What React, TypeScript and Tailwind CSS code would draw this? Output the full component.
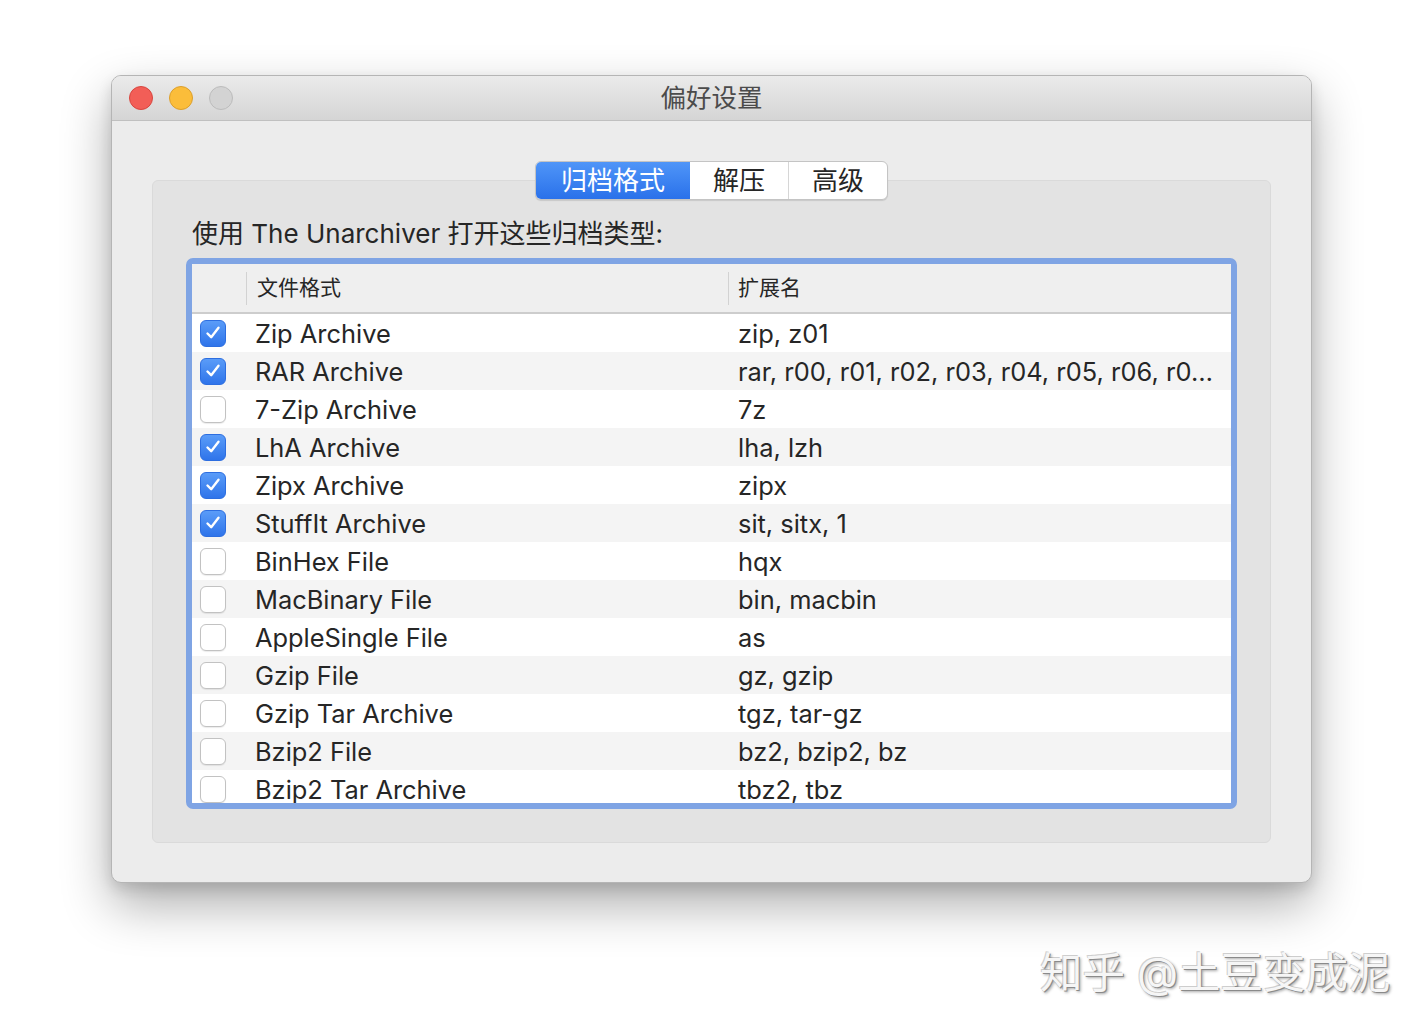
import React from 'react';

type Row = { name: string; ext: string; checked: boolean };

const rows: Row[] = [
  { name: 'Zip Archive', ext: 'zip, z01', checked: true },
  { name: 'RAR Archive', ext: 'rar, r00, r01, r02, r03, r04, r05, r06, r0…', checked: true },
  { name: '7-Zip Archive', ext: '7z', checked: false },
  { name: 'LhA Archive', ext: 'lha, lzh', checked: true },
  { name: 'Zipx Archive', ext: 'zipx', checked: true },
  { name: 'StuffIt Archive', ext: 'sit, sitx, 1', checked: true },
  { name: 'BinHex File', ext: 'hqx', checked: false },
  { name: 'MacBinary File', ext: 'bin, macbin', checked: false },
  { name: 'AppleSingle File', ext: 'as', checked: false },
  { name: 'Gzip File', ext: 'gz, gzip', checked: false },
  { name: 'Gzip Tar Archive', ext: 'tgz, tar-gz', checked: false },
  { name: 'Bzip2 File', ext: 'bz2, bzip2, bz', checked: false },
  { name: 'Bzip2 Tar Archive', ext: 'tbz2, tbz', checked: false },
];

const font = 'font-[Inter,"Noto_Sans_CJK_SC",sans-serif]';

function Checkbox({ checked }: { checked: boolean }) {
  if (checked) {
    return (
      <div className="w-[26px] h-[27px] rounded-[6px] bg-gradient-to-b from-[#5a9cf8] to-[#2f74ea] border border-[#2d6ee0] flex items-center justify-center">
        <svg width="18" height="18" viewBox="0 0 18 18" fill="none">
          <path d="M3.5 9.5 L7.2 13.2 L14.5 3.8" stroke="white" strokeWidth="2.4" strokeLinecap="round" strokeLinejoin="round" />
        </svg>
      </div>
    );
  }
  return (
    <div className="w-[26px] h-[27px] rounded-[6px] bg-white border border-[#c2c2c2] shadow-[0_1px_1px_rgba(0,0,0,0.08)]" />
  );
}

function TrafficLights() {
  return (
    <div className="flex items-center gap-[16px] pl-[17px]">
      <div className="w-[24px] h-[24px] rounded-full bg-[#f25e57] border border-[#d8463f]" />
      <div className="w-[24px] h-[24px] rounded-full bg-[#fbbd3a] border border-[#dc9f2c]" />
      <div className="w-[24px] h-[24px] rounded-full bg-[#d3d3d3] border border-[#bcbcbc]" />
    </div>
  );
}

function Tabs() {
  return (
    <div className="flex justify-center relative z-10">
      <div className="flex h-[39px] rounded-[6px] border border-[#c4c4c4] bg-white shadow-[0_1px_1px_rgba(0,0,0,0.12)] overflow-hidden">
        <div className="w-[154px] flex items-center justify-center bg-gradient-to-b from-[#4f95f8] to-[#2a71ea] text-white text-[26px]">
          归档格式
        </div>
        <div className="w-[99px] flex items-center justify-center text-[#262626] text-[26px] border-r border-[#d6d6d6]">
          解压
        </div>
        <div className="w-[98px] flex items-center justify-center text-[#262626] text-[26px]">
          高级
        </div>
      </div>
    </div>
  );
}

function FileTable() {
  return (
    <div className="border-[6px] border-[#7fa4e4] rounded-[7px] h-[551px] overflow-hidden">
      <div className="bg-white h-full overflow-hidden flex flex-col">
        {/* Header */}
        <div className="flex h-[50px] shrink-0 bg-[#efefef] border-b-2 border-[#cdcdcd] text-[21px] text-[#262626]">
          <div className="w-[55px] flex items-center justify-end">
            <div className="w-px h-[33px] bg-[#d2d2d2]" />
          </div>
          <div className="w-[482px] flex items-center justify-between pl-[10px]">
            <span>文件格式</span>
            <div className="w-px h-[33px] bg-[#d2d2d2]" />
          </div>
          <div className="flex-1 flex items-center pl-[9px]">扩展名</div>
        </div>
        {/* Rows */}
        {rows.map((r, i) => (
          <div
            key={r.name}
            className={`flex h-[38px] shrink-0 items-center text-[25.4px] text-[#262626] ${i % 2 === 0 ? 'bg-white' : 'bg-[#f4f4f4]'}`}
          >
            <div className="w-[55px] pl-[8px] flex items-center">
              <Checkbox checked={r.checked} />
            </div>
            <div className="w-[482px] pl-[8px] pt-[3px] whitespace-nowrap">{r.name}</div>
            <div className="flex-1 pl-[9px] pt-[3px] whitespace-nowrap overflow-hidden">{r.ext}</div>
          </div>
        ))}
      </div>
    </div>
  );
}

export default function App() {
  return (
    <div className={`relative w-[1424px] h-[1032px] bg-white overflow-hidden ${font}`}>
      <div className="pt-[75px] pl-[111px]">
        <div className="w-[1201px] h-[808px] rounded-[10px] bg-[#ececec] border border-[#b5b5b5] shadow-[0_22px_50px_rgba(0,0,0,0.32),0_6px_14px_rgba(0,0,0,0.12)] overflow-hidden flex flex-col">
          {/* Title bar */}
          <div className="relative h-[45px] shrink-0 flex items-center bg-gradient-to-b from-[#ebebeb] to-[#d5d5d5] border-b border-[#c0c0c0]">
            <TrafficLights />
            <div className="absolute inset-0 flex items-center justify-center text-[25.5px] text-[#4b4b4b] pointer-events-none">
              偏好设置
            </div>
          </div>

          {/* Body */}
          <div className="flex-1 px-[40px] pt-[40px] pb-[39px] flex flex-col">
            <Tabs />
            <div className="-mt-[20px] flex-1 rounded-[6px] bg-[#e3e3e3] border border-[#dadada] px-[33px] pt-[37px] pb-[33px] flex flex-col">
              <div className="pl-[6px] h-[30px] flex items-center text-[26px] text-[#262626] mb-[10px] whitespace-nowrap">
                使用 The Unarchiver 打开这些归档类型:
              </div>
              <FileTable />
            </div>
          </div>
        </div>
      </div>

      {/* Watermark */}
      <div className="absolute left-[1040px] top-[945px] text-[42.5px] leading-[56px] text-[#f6f6f6] [text-shadow:1px_1px_0_#8a8a8a,2px_2px_3px_rgba(0,0,0,0.35),-1px_-1px_0_#d0d0d0] whitespace-nowrap">
        知乎 @土豆变成泥
      </div>
    </div>
  );
}
